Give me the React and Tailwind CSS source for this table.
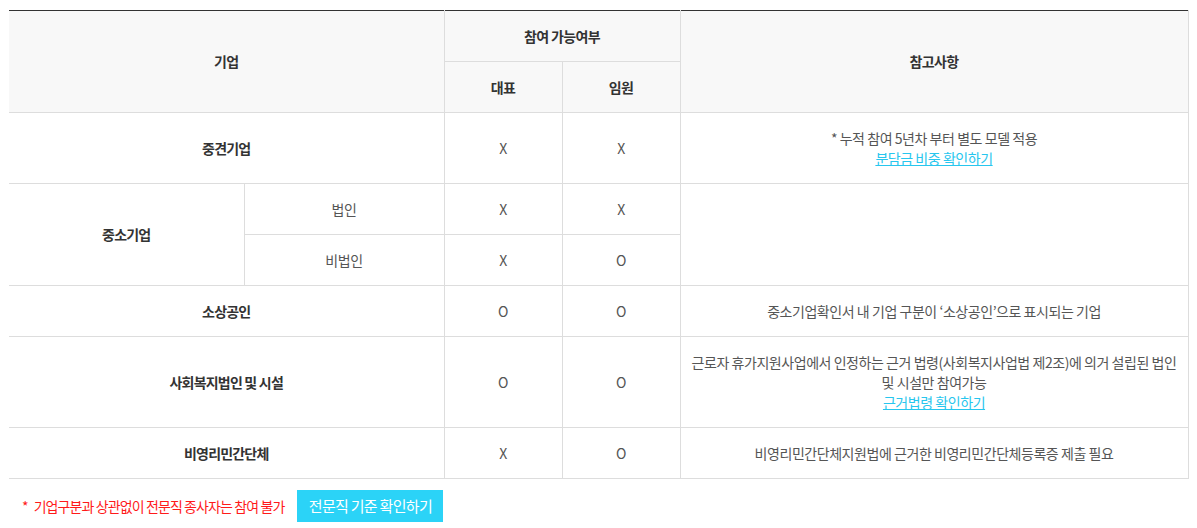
import React from "react";

const th = "border border-[#dddddd] bg-[#f8f8f8] text-[#333] font-bold text-[14px] tracking-[-0.6px] text-center align-middle";
const td = "border border-[#dddddd] text-[#555] text-[14px] tracking-[-0.45px] text-center align-middle";
const tdHead = "border border-[#dddddd] text-[#333] font-bold text-[14px] tracking-[-0.8px] text-center align-middle";

function App() {
  return (
    <div
      className="min-h-screen bg-white pt-[10px] px-[9px]"
      style={{ fontFamily: '"Noto Sans CJK KR", "Noto Sans", sans-serif' }}
    >
      <table className="w-[1179px] border-collapse table-fixed border-t border-t-[#333] border-l-0">
        <colgroup>
          <col className="w-[235px]" />
          <col className="w-[200px]" />
          <col className="w-[118px]" />
          <col className="w-[118px]" />
          <col className="w-[508px]" />
        </colgroup>
        <thead>
          <tr className="h-[51px]">
            <th colSpan={2} rowSpan={2} className={th + " border-l-0 border-t-[#333]"}>
              기업
            </th>
            <th colSpan={2} className={th + " border-t-[#333]"}>
              참여 가능여부
            </th>
            <th rowSpan={2} className={th + " border-t-[#333]"}>
              참고사항
            </th>
          </tr>
          <tr className="h-[51px]">
            <th className={th}>대표</th>
            <th className={th}>임원</th>
          </tr>
        </thead>
        <tbody>
          <tr className="h-[71px]">
            <td colSpan={2} className={tdHead + " border-l-0"}>
              중견기업
            </td>
            <td className={td}>X</td>
            <td className={td}>X</td>
            <td className={td + " leading-[20px]"}>
              <div>* 누적 참여 5년차 부터 별도 모델 적용</div>
              <a href="#" className="text-[#27c6ee] underline">
                분담금 비중 확인하기
              </a>
            </td>
          </tr>
          <tr className="h-[51px]">
            <td rowSpan={2} className={tdHead + " border-l-0"}>
              중소기업
            </td>
            <td className={td}>법인</td>
            <td className={td}>X</td>
            <td className={td}>X</td>
            <td rowSpan={2} className={td}></td>
          </tr>
          <tr className="h-[51px]">
            <td className={td}>비법인</td>
            <td className={td}>X</td>
            <td className={td}>O</td>
          </tr>
          <tr className="h-[51px]">
            <td colSpan={2} className={tdHead + " border-l-0"}>
              소상공인
            </td>
            <td className={td}>O</td>
            <td className={td}>O</td>
            <td className={td}>중소기업확인서 내 기업 구분이 ‘소상공인’으로 표시되는 기업</td>
          </tr>
          <tr className="h-[91px]">
            <td colSpan={2} className={tdHead + " border-l-0"}>
              사회복지법인 및 시설
            </td>
            <td className={td}>O</td>
            <td className={td}>O</td>
            <td className={td + " leading-[20px] px-[4px]"}>
              <div className="whitespace-nowrap">근로자 휴가지원사업에서 인정하는 근거 법령(사회복지사업법 제2조)에 의거 설립된 법인</div>
              <div>및 시설만 참여가능</div>
              <a href="#" className="text-[#27c6ee] underline">
                근거법령 확인하기
              </a>
            </td>
          </tr>
          <tr className="h-[51px]">
            <td colSpan={2} className={tdHead + " border-l-0"}>
              비영리민간단체
            </td>
            <td className={td}>X</td>
            <td className={td}>O</td>
            <td className={td}>비영리민간단체지원법에 근거한 비영리민간단체등록증 제출 필요</td>
          </tr>
        </tbody>
      </table>
      <div className="flex items-center mt-[11px] pl-[13px]">
        <span className="text-[#ff1a1a] text-[14px] tracking-[-0.9px]">
          <span className="mr-[6px]">*</span>기업구분과 상관없이 전문직 종사자는 참여 불가
        </span>
        <button className="ml-[13px] h-[32px] w-[146px] bg-[#2bd3f7] text-white text-[15px] tracking-[-0.7px]">
          전문직 기준 확인하기
        </button>
      </div>
    </div>
  );
}

export default App;
